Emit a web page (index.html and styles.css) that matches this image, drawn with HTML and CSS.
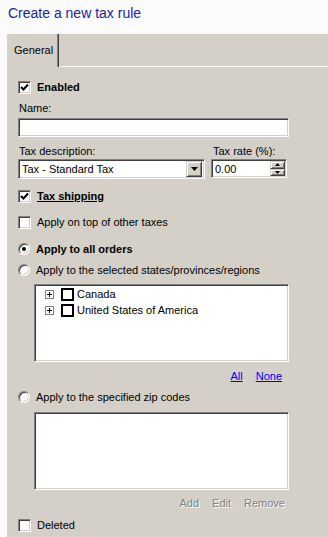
FILE: index.html
```html
<!DOCTYPE html>
<html lang="en">
<head>
    <meta charset="UTF-8">
    <meta name="viewport" content="width=device-width, initial-scale=1.0">
    <title>Create a new tax rule</title>
    <link rel="stylesheet" href="styles.css">
</head>
<body>

    <div class="title">Create a new tax rule</div>

    <div class="panel">
        <div class="tabs">
            <div class="tab">General</div>
            <div class="tab-rest"></div>
        </div>

        <div class="content">
            <div class="row r-enabled">
                <span class="cb"><svg width="9" height="9" viewBox="0 0 9 9"><path d="M1 4 L3.5 6.5 L8 1.5" fill="none" stroke="#000" stroke-width="2"/></svg></span>
                <span class="bold">Enabled</span>
            </div>

            <div class="label r-name">Name:</div>
            <div class="field name-field"></div>

            <div class="pair">
                <div class="col-desc">
                    <div class="label">Tax description:</div>
                    <div class="field select">
                        <span class="select-text">Tax - Standard Tax</span>
                        <span class="btn drop"><svg width="7" height="4" viewBox="0 0 7 4"><path d="M0 0 H7 L3.5 4 Z" fill="#000"/></svg></span>
                    </div>
                </div>
                <div class="col-rate">
                    <div class="label">Tax rate (%):</div>
                    <div class="field spin">
                        <span class="spin-text">0.00</span>
                        <span class="spin-btns">
                            <span class="btn spin-btn"><svg width="5" height="3" viewBox="0 0 5 3"><path d="M0 3 H5 L2.5 0 Z" fill="#000"/></svg></span>
                            <span class="btn spin-btn"><svg width="5" height="3" viewBox="0 0 5 3"><path d="M0 0 H5 L2.5 3 Z" fill="#000"/></svg></span>
                        </span>
                    </div>
                </div>
            </div>

            <div class="row r-ship">
                <span class="cb"><svg width="9" height="9" viewBox="0 0 9 9"><path d="M1 4 L3.5 6.5 L8 1.5" fill="none" stroke="#000" stroke-width="2"/></svg></span>
                <span class="bold underline">Tax shipping</span>
            </div>

            <div class="row r-top">
                <span class="cb"></span>
                <span>Apply on top of other taxes</span>
            </div>

            <div class="row r-all">
                <span class="radio checked"></span>
                <span class="bold">Apply to all orders</span>
            </div>

            <div class="row r-sel">
                <span class="radio"></span>
                <span>Apply to the selected states/provinces/regions</span>
            </div>

            <div class="box tree">
                <div class="tree-item">
                    <span class="plus"></span>
                    <span class="tree-cb"></span>
                    <span>Canada</span>
                </div>
                <div class="tree-item">
                    <span class="plus"></span>
                    <span class="tree-cb"></span>
                    <span>United States of America</span>
                </div>
            </div>

            <div class="links">
                <a href="#">All</a>
                <a href="#">None</a>
            </div>

            <div class="row r-zip">
                <span class="radio"></span>
                <span>Apply to the specified zip codes</span>
            </div>

            <div class="box zip"></div>

            <div class="actions">
                <span class="disabled">Add</span>
                <span class="disabled">Edit</span>
                <span class="disabled">Remove</span>
            </div>

            <div class="row r-deleted">
                <span class="cb"></span>
                <span>Deleted</span>
            </div>
        </div>
    </div>

</body>
</html>
```

FILE: styles.css
```css
body {
    margin: 0;
    background: #fbfbfb;
    font-family: "Liberation Sans", Arial, sans-serif;
    font-size: 11px;
    color: #000;
}

.title {
    height: 34px;
    box-sizing: border-box;
    padding: 4px 0 0 8px;
    font-size: 14px;
    line-height: 18px;
    color: #2323a3;
}

.panel {
    margin-left: 7px;
    background: #d4d0c8;
    height: 503px;
}

/* onglets */
.tabs {
    display: flex;
    height: 33px;
}

.tab {
    width: 52px;
    padding-left: 7px;
    box-sizing: border-box;
    line-height: 32px;
    border-right: 1px solid #404040;
    box-shadow: inset -1px 0 #808080;
}

.tab-rest {
    flex: 1;
    border-bottom: 1px solid #fff;
    height: 32px;
}

.content {
    padding-left: 11px;
    width: 271px;
}

.row {
    display: flex;
    align-items: center;
    gap: 6px;
    height: 14px;
    line-height: 14px;
}

.bold {
    font-weight: bold;
}

.underline {
    text-decoration: underline;
}

.label {
    line-height: 14px;
    padding-left: 1px;
}

.r-enabled { margin-top: 13px; }
.r-name { margin-top: 7px; }
.r-ship { margin-top: 10px; }
.r-top { margin-top: 12px; }
.r-all { margin-top: 13px; }
.r-sel { margin-top: 7px; }
.r-zip { margin-top: 7px; }
.r-deleted { margin-top: 8px; }

/* cases a cocher */
.cb {
    width: 13px;
    height: 13px;
    box-sizing: border-box;
    background: #fff;
    border: 1px solid;
    border-color: #808080 #fff #fff #808080;
    box-shadow: inset 1px 1px #404040, inset -1px -1px #d4d0c8;
    display: flex;
    align-items: center;
    justify-content: center;
    flex-shrink: 0;
}

.radio {
    width: 12px;
    height: 12px;
    box-sizing: border-box;
    border-radius: 50%;
    background: #fff;
    border: 1px solid;
    border-color: #808080 #fff #fff #808080;
    box-shadow: inset 1px 1px #404040, inset -1px -1px #d4d0c8;
    display: flex;
    align-items: center;
    justify-content: center;
    flex-shrink: 0;
}

.radio.checked::after {
    content: "";
    width: 4px;
    height: 4px;
    border-radius: 50%;
    background: #000;
}

/* champs */
.field {
    box-sizing: border-box;
    background: #fff;
    border: 1px solid;
    border-color: #808080 #fff #fff #808080;
    box-shadow: inset 1px 1px #404040, inset -1px -1px #d4d0c8;
}

.name-field {
    margin-top: 3px;
    height: 19px;
}

.pair {
    display: flex;
    justify-content: space-between;
    margin-top: 7px;
}

.col-desc {
    width: 187px;
}

.col-rate {
    width: 76px;
    margin-right: 2px;
}

.col-rate .label {
    padding-left: 2px;
}

.select {
    margin-top: 1px;
    height: 20px;
    display: flex;
    align-items: center;
    padding: 2px;
}

.select-text {
    flex: 1;
    padding-left: 1px;
}

.btn {
    background: #d4d0c8;
    box-sizing: border-box;
    border: 1px solid;
    border-color: #d4d0c8 #404040 #404040 #d4d0c8;
    box-shadow: inset 1px 1px #fff, inset -1px -1px #808080;
    display: flex;
    align-items: center;
    justify-content: center;
}

.drop {
    width: 16px;
    height: 16px;
}

.spin {
    margin-top: 1px;
    height: 19px;
    display: flex;
    align-items: center;
    padding: 2px 1px 2px 2px;
}

.spin-text {
    flex: 1;
    padding-left: 1px;
}

.spin-btns {
    display: flex;
    flex-direction: column;
    width: 15px;
    height: 15px;
}

.spin-btn {
    flex: 1;
}

/* listes */
.box {
    margin-left: 16px;
    box-sizing: border-box;
    background: #fff;
    border: 1px solid;
    border-color: #808080 #fff #fff #808080;
    box-shadow: inset 1px 1px #404040, inset -1px -1px #d4d0c8;
    width: 255px;
}

.tree {
    margin-top: 7px;
    height: 78px;
    padding: 1px 0 0 10px;
}

.tree-item {
    display: flex;
    align-items: center;
    height: 16px;
}

.plus {
    width: 9px;
    height: 9px;
    box-sizing: border-box;
    border: 1px solid #808080;
    background:
        linear-gradient(#000, #000) center / 5px 1px no-repeat,
        linear-gradient(#000, #000) center / 1px 5px no-repeat,
        #fff;
    margin-right: 7px;
}

.tree-cb {
    width: 13px;
    height: 13px;
    box-sizing: border-box;
    border: 2px solid #000;
    margin-right: 3px;
}

.links {
    display: flex;
    justify-content: flex-end;
    gap: 13px;
    padding-right: 7px;
    margin-top: 7px;
    line-height: 14px;
}

.links a {
    color: #0000ff;
}

.zip {
    margin-top: 8px;
    height: 78px;
}

.actions {
    display: flex;
    justify-content: flex-end;
    gap: 13px;
    padding-right: 4px;
    margin-top: 6px;
    line-height: 14px;
}

.disabled {
    color: #808080;
    text-shadow: 1px 1px #fff;
}
```
